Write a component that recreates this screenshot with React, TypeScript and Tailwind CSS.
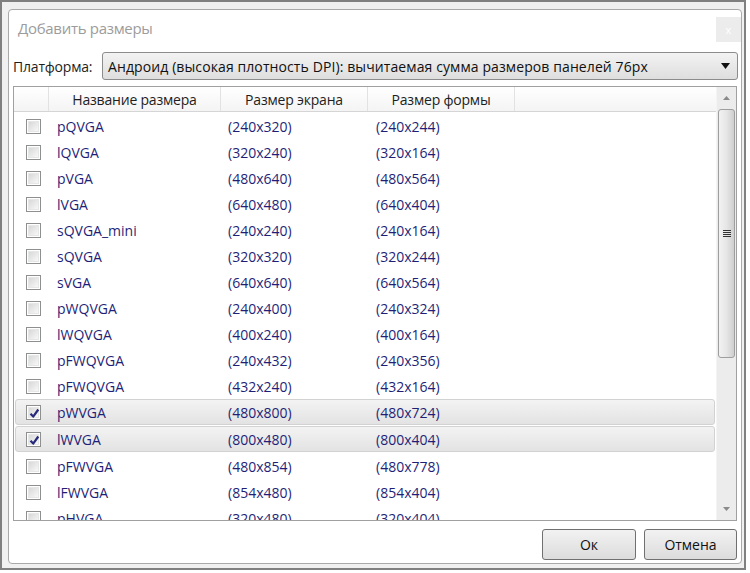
import React from "react";

const rows: [string, string, string, boolean][] = [
  ["pQVGA", "(240x320)", "(240x244)", false],
  ["lQVGA", "(320x240)", "(320x164)", false],
  ["pVGA", "(480x640)", "(480x564)", false],
  ["lVGA", "(640x480)", "(640x404)", false],
  ["sQVGA_mini", "(240x240)", "(240x164)", false],
  ["sQVGA", "(320x320)", "(320x244)", false],
  ["sVGA", "(640x640)", "(640x564)", false],
  ["pWQVGA", "(240x400)", "(240x324)", false],
  ["lWQVGA", "(400x240)", "(400x164)", false],
  ["pFWQVGA", "(240x432)", "(240x356)", false],
  ["pFWQVGA", "(432x240)", "(432x164)", false],
  ["pWVGA", "(480x800)", "(480x724)", true],
  ["lWVGA", "(800x480)", "(800x404)", true],
  ["pFWVGA", "(480x854)", "(480x778)", false],
  ["lFWVGA", "(854x480)", "(854x404)", false],
  ["pHVGA", "(320x480)", "(320x404)", false],
];

function CheckBox({ checked }: { checked: boolean }) {
  return (
    <div className="w-[15px] h-[15px] border border-[#8e8f8f] bg-white p-[1px] shrink-0">
      <div className="w-full h-full bg-gradient-to-br from-[#d8d8d8] to-[#f8f8f8] border border-[#e6e6e6] flex items-center justify-center relative">
        {checked && (
          <svg width="11" height="11" viewBox="0 0 11 11" className="absolute left-[0px] top-[0px]">
            <path d="M1.5 5.8 L4.2 8.6 L9.3 1.5" stroke="#262a7a" strokeWidth="2.2" fill="none" strokeLinejoin="round" />
          </svg>
        )}
      </div>
    </div>
  );
}

export default function App() {
  const font = { fontFamily: '"Open Sans", "Noto Sans", sans-serif' };
  return (
    <div className="w-[750px] h-[573px] bg-white" style={font}>
      <div className="w-[746px] h-[570px] border-2 border-[#808080] bg-[#f0f0f0] px-[6px] pt-[7px]">
        <div className="w-[734px] h-[555px] border border-[#a9a9a9] rounded-[4px] bg-white flex flex-col">
          {/* title row */}
          <div className="h-[42px] flex items-start justify-between shrink-0">
            <div className="pl-[9px] pt-[8px] text-[15px] leading-[20px] text-[#9c9c9c] tracking-[-0.3px]">Добавить размеры</div>
            <div className="mt-[7px] mr-[0px] w-[25px] h-[25px] bg-[#ececec] flex items-center justify-center text-[11px] text-white leading-none">x</div>
          </div>
          {/* platform row */}
          <div className="h-[28px] flex items-center pl-[4px] pr-[3px] shrink-0">
            <div className="text-[14px] text-[#1e1e1e] w-[89px] tracking-[-0.2px] whitespace-nowrap">Платформа:</div>
            <div className="flex-1 h-[28px] border border-[#8c8c8c] rounded-[3px] bg-gradient-to-b from-[#f3f3f3] to-[#dedede] flex items-center pl-[5px] pr-[7px]">
              <div className="flex-1 text-[14px] text-[#111] tracking-[0.1px] whitespace-nowrap">Андроид (высокая плотность DPI): вычитаемая сумма размеров панелей 76px</div>
              <svg width="9" height="6" viewBox="0 0 9 6"><path d="M0 0 L9 0 L4.5 6 Z" fill="#111" /></svg>
            </div>
          </div>
          {/* table */}
          <div className="mt-[6px] mx-[4px] h-[435px] border border-[#a0a0a0] flex shrink-0 overflow-hidden">
            <div className="flex-1 flex flex-col overflow-hidden">
              <div className="h-[25px] flex shrink-0 bg-gradient-to-b from-white to-[#f4f4f4] border-b border-[#d5d5d5] text-[14px] text-[#1e1e1e] tracking-[-0.2px]">
                <div className="w-[35px] border-r border-[#e2e2e2]" />
                <div className="w-[172px] border-r border-[#e2e2e2] flex items-center justify-center">Название размера</div>
                <div className="w-[147px] border-r border-[#e2e2e2] flex items-center justify-center">Размер экрана</div>
                <div className="w-[147px] border-r border-[#e2e2e2] flex items-center justify-center">Размер формы</div>
                <div className="flex-1" />
              </div>
              <div className="flex flex-col pt-[1px] px-[1px]">
                {rows.map((r, i) => (
                  <div
                    key={i}
                    className={
                      "h-[26px] shrink-0 flex items-center text-[14px] text-[#1f1f78] " +
                      (r[3]
                        ? "border border-[#d2d2d2] rounded-[3px] bg-gradient-to-b from-[#f3f3f3] to-[#e3e3e3] mb-[1px] h-[25px]"
                        : "border border-transparent")
                    }
                  >
                    <div className="w-[33px] flex justify-center pl-[2px]"><CheckBox checked={r[3]} /></div>
                    <div className="w-[172px] pl-[8px]">{r[0]}</div>
                    <div className="w-[147px] pl-[7px]">{r[1]}</div>
                    <div className="w-[147px] pl-[8px]">{r[2]}</div>
                  </div>
                ))}
              </div>
            </div>
            {/* scrollbar */}
            <div className="w-[20px] bg-[#ececec] border-l border-[#f4f4f4] flex flex-col items-center shrink-0">
              <div className="h-[22px] flex items-center justify-center">
                <svg width="7" height="4" viewBox="0 0 7 4"><path d="M0 4 L7 4 L3.5 0 Z" fill="#8a8a8a" /></svg>
              </div>
              <div className="w-[17px] h-[249px] border border-[#9e9e9e] rounded-[3px] bg-gradient-to-r from-[#f2f2f2] via-[#e6e6e6] to-[#cfcfcf] flex items-center justify-center">
                <div className="flex flex-col gap-[1px]">
                  <div className="w-[8px] h-[1px] bg-[#333]" />
                  <div className="w-[8px] h-[1px] bg-[#333]" />
                  <div className="w-[8px] h-[1px] bg-[#333]" />
                  <div className="w-[8px] h-[1px] bg-[#333]" />
                </div>
              </div>
              <div className="flex-1" />
              <div className="h-[22px] flex items-center justify-center">
                <svg width="7" height="4" viewBox="0 0 7 4"><path d="M0 0 L7 0 L3.5 4 Z" fill="#8a8a8a" /></svg>
              </div>
            </div>
          </div>
          {/* buttons */}
          <div className="mt-[8px] flex justify-end gap-[8px] pr-[4px]">
            <button className="w-[94px] h-[31px] border border-[#707070] rounded-[3px] bg-gradient-to-b from-[#f2f2f2] to-[#dcdcdc] text-[14px] text-[#111]">Ок</button>
            <button className="w-[93px] h-[31px] border border-[#707070] rounded-[3px] bg-gradient-to-b from-[#f2f2f2] to-[#dcdcdc] text-[14px] text-[#111]">Отмена</button>
          </div>
        </div>
      </div>
    </div>
  );
}
